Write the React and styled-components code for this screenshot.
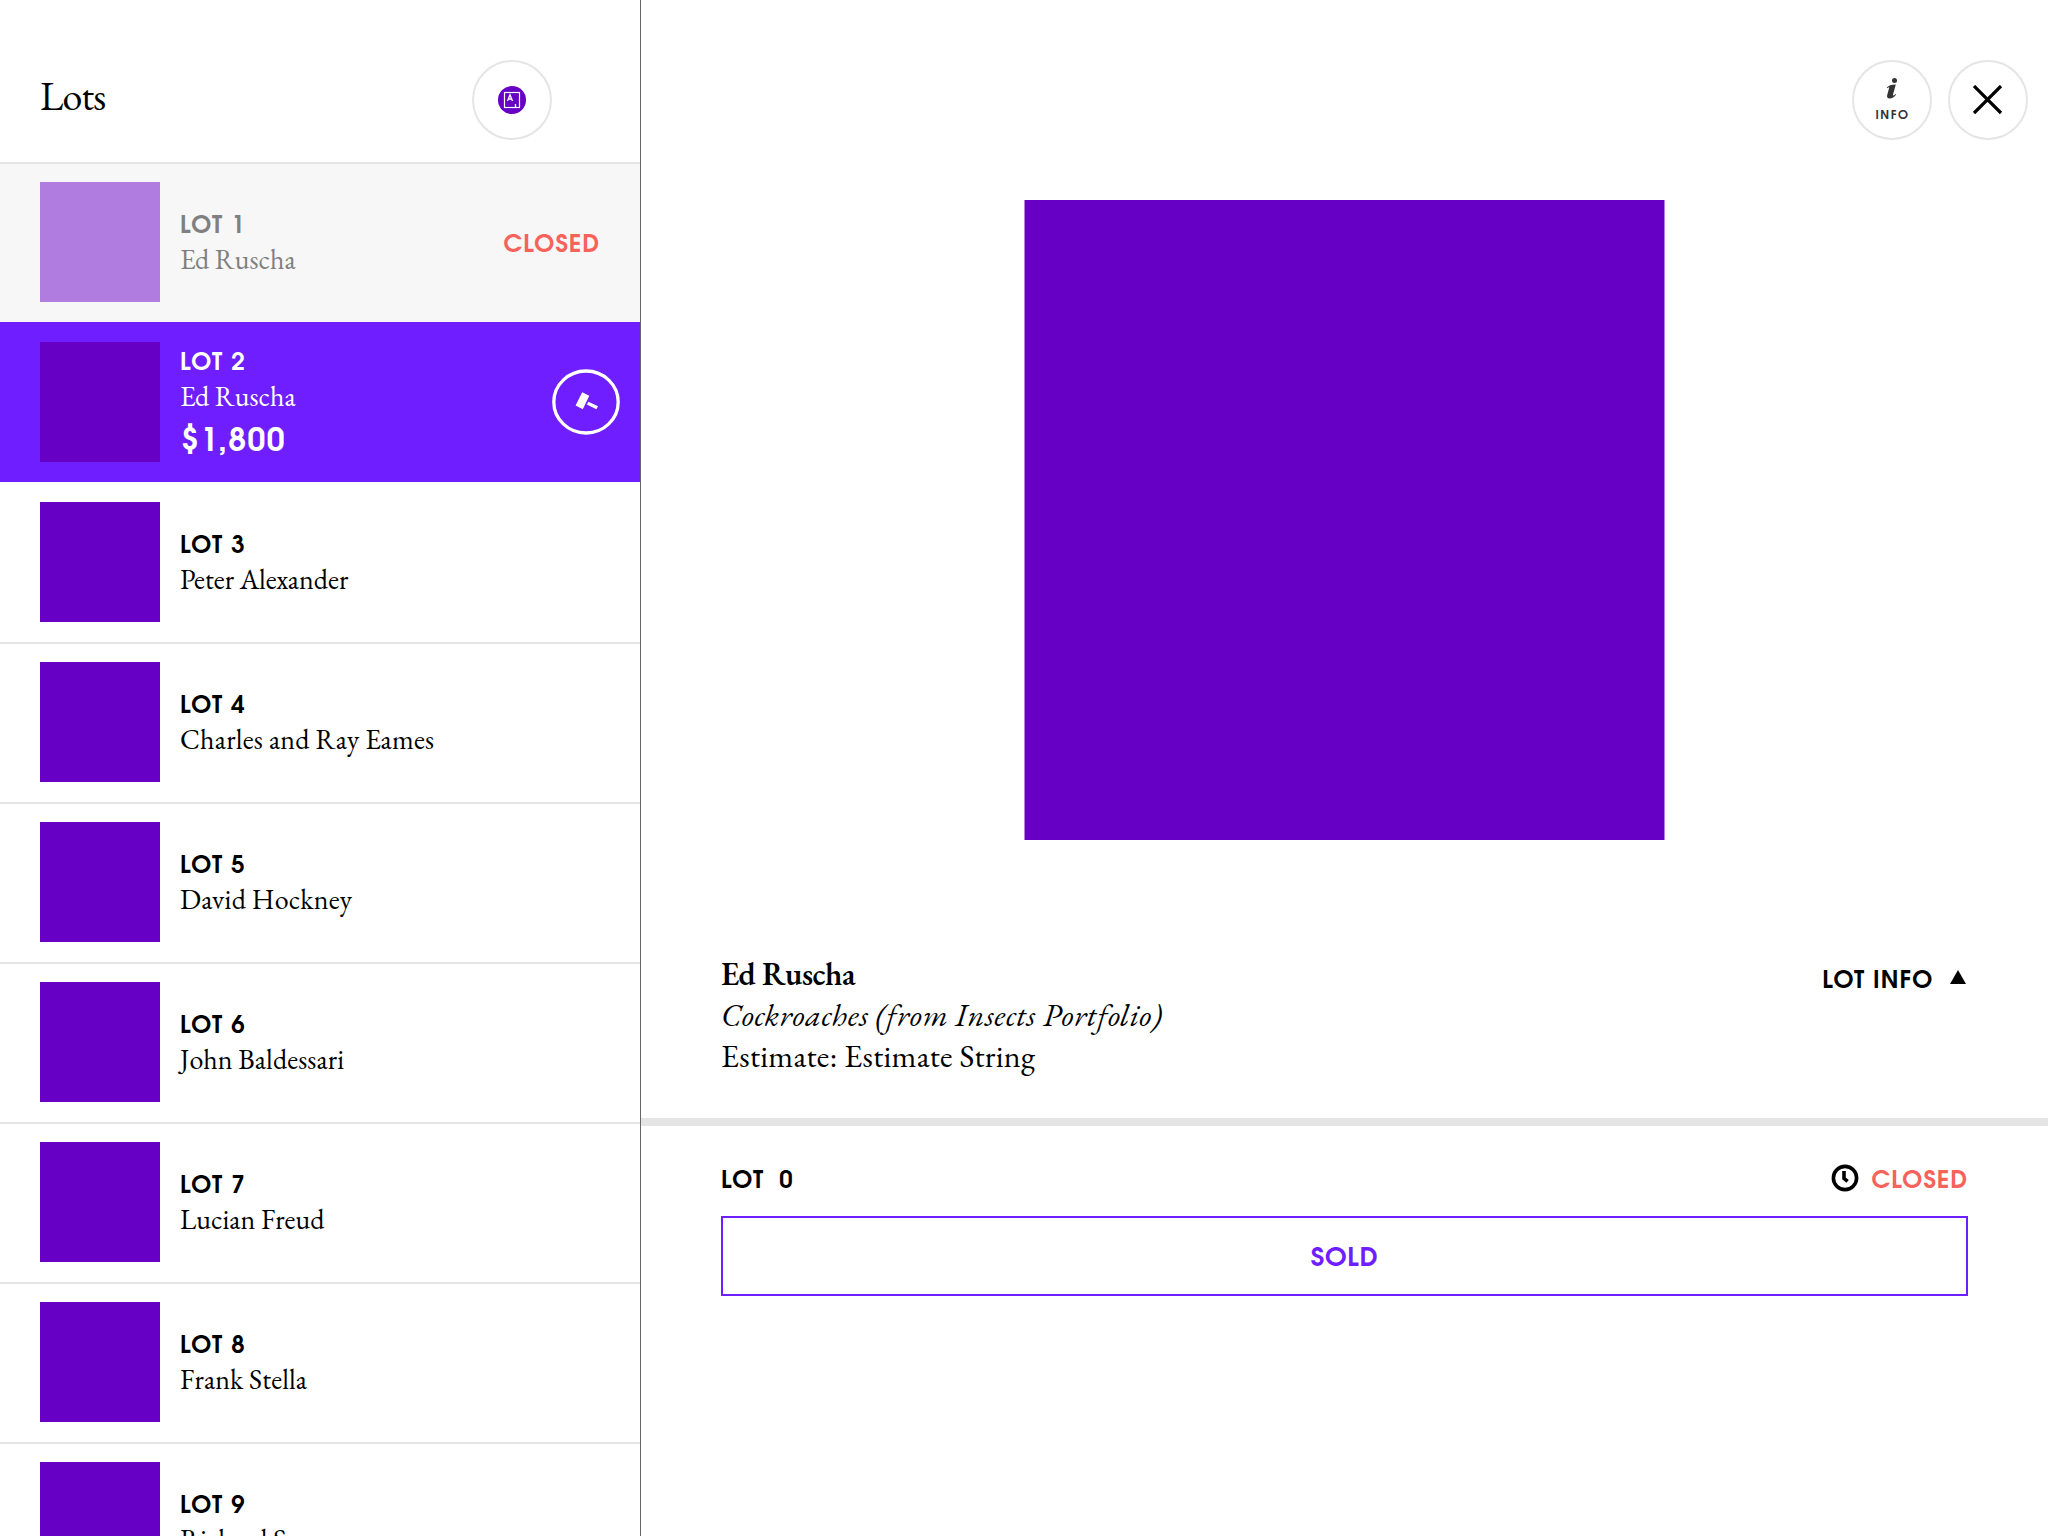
import React from "react";
import styled, { createGlobalStyle, css } from "styled-components";

const purple = "#6700c4";
const violet = "#6e1eff";
const coral = "#f7625a";
const line = "#e5e5e5";

const Global = createGlobalStyle`
  * { box-sizing: border-box; }
  body { margin: 0; background: #fff; color: #000; overflow: hidden; }
`;

const serif = css`font-family: "EB Garamond", "Liberation Serif", serif;`;
const sans = css`font-family: "TeX Gyre Adventor", Lato, "Liberation Sans", sans-serif; font-weight: 700;`;

const Screen = styled.div`
  display: flex;
  width: 2048px;
  height: 1536px;
  overflow: hidden;
`;

const Sidebar = styled.aside`
  flex: none;
  width: 641px;
  height: 1536px;
  overflow: hidden;
  border-right: 1px solid #666;
`;

const SidebarHeader = styled.header`
  display: flex;
  justify-content: space-between;
  align-items: flex-start;
  height: 162px;
  padding: 60px 88px 0 40px;
`;

const Heading = styled.h1`
  ${serif}
  margin: 12px 0 0;
  font-size: 40px;
  line-height: 48px;
  font-weight: 400;
  letter-spacing: -0.8px;
`;

const CircleButton = styled.button`
  display: flex;
  flex-direction: column;
  align-items: center;
  justify-content: center;
  width: 80px;
  height: 80px;
  padding: 0;
  border: 2px solid ${line};
  border-radius: 50%;
  background: #fff;
`;

const InfoLabel = styled.span`
  ${sans}
  height: 16px;
  margin-top: 7px;
  margin-right: -1px;
  padding-top: 2px;
  font-size: 12px;
  line-height: 16px;
  letter-spacing: 1.5px;
  color: #333;
`;

const Row = styled.article`
  display: flex;
  align-items: center;
  height: 160px;
  padding: 18px 20px 20px 40px;
  border-top: 2px solid ${(p) => (p.$state === "live" ? violet : p.$plain ? "#fff" : line)};
  background: ${(p) => (p.$state === "live" ? violet : p.$state === "closed" ? "#f7f7f7" : "#fff")};
  color: ${(p) => (p.$state === "live" ? "#fff" : p.$state === "closed" ? "#808080" : "#000")};
`;

const Thumb = styled.div`
  flex: none;
  width: 120px;
  height: 120px;
  background: ${(p) => (p.$faded ? "#b07ce0" : purple)};
`;

const RowText = styled.div`
  flex: 1;
  padding: 0 0 2px 20px;
`;

const LotNumber = styled.div`
  ${sans}
  height: 36px;
  padding-top: 3px;
  font-size: 24px;
  line-height: 36px;
  letter-spacing: ${(p) => p.$track ?? 1.2}px;
`;

const Artist = styled.div`
  ${serif}
  font-size: 28px;
  line-height: 36px;
  letter-spacing: ${(p) => p.$track ?? 0}px;
`;

const Price = styled.div`
  ${sans}
  height: 46px;
  padding: 5px 0 0 1px;
  font-size: 32px;
  line-height: 46px;
  letter-spacing: 1.3px;
`;

const Status = styled.span`
  ${sans}
  height: 36px;
  margin-right: 20px;
  padding-top: 3px;
  font-size: 24px;
  line-height: 36px;
  letter-spacing: 0.95px;
  color: ${coral};
`;

const Detail = styled.main`
  flex: 1;
  display: flex;
  flex-direction: column;
`;

const Toolbar = styled.div`
  display: flex;
  justify-content: flex-end;
  gap: 16px;
  height: 200px;
  padding: 60px 20px 0 0;
`;

const Artwork = styled.div`
  width: 640px;
  height: 640px;
  margin-left: 383px;
  transform: translateX(0.5px);
  background: ${purple};
`;

const Summary = styled.section`
  display: flex;
  justify-content: space-between;
  height: 286px;
  padding: 114px 80px 0;
  border-bottom: 8px solid ${line};
`;

const SummaryLine = styled.div`
  ${serif}
  font-size: 32px;
  line-height: 41px;
  letter-spacing: ${(p) => p.$track}px;
  font-style: ${(p) => (p.$italic ? "italic" : "normal")};
  font-weight: ${(p) => (p.$strong ? 600 : 400)};
`;

const InfoToggle = styled.div`
  display: flex;
  align-items: center;
  height: 36px;
  margin: 6px 2px 0 0;
  gap: 16.5px;
`;

const Bidding = styled.section`
  padding: 34px 80px 0;
`;

const BiddingHead = styled.div`
  display: flex;
  justify-content: space-between;
  align-items: center;
  height: 36px;
`;

const LotZero = styled.div`
  display: flex;
  gap: 15px;
`;

const Closed = styled.div`
  display: flex;
  align-items: center;
  gap: 13px;
  color: ${coral};
`;

const SoldButton = styled.button`
  ${sans}
  display: block;
  width: 1247px;
  height: 80px;
  margin-top: 20px;
  padding: 5px 0 0;
  border: 2px solid ${violet};
  background: #fff;
  color: ${violet};
  font-size: 26px;
  letter-spacing: 0.6px;
`;

const lots = [
  { n: 1, artist: "Ed Ruscha", state: "closed" },
  { n: 2, artist: "Ed Ruscha", state: "live", price: "$1,800" },
  { n: 3, artist: "Peter Alexander", plain: true },
  { n: 4, artist: "Charles and Ray Eames", track: 0.23 },
  { n: 5, artist: "David Hockney", track: 0.2 },
  { n: 6, artist: "John Baldessari", track: 0.1 },
  { n: 7, artist: "Lucian Freud" },
  { n: 8, artist: "Frank Stella", track: 0.12 },
  { n: 9, artist: "Richard Serra" },
];

const AuctionIcon = () => (
  <svg width="28" height="28" viewBox="0 0 28 28">
    <circle cx="14" cy="14" r="14" fill={purple} />
    <rect x="6.5" y="6.5" width="15" height="15" fill="none" stroke="#fff" strokeWidth="1.2" />
    <path d="M9.5 15 12 8.8 14.5 15M10.3 13H13.7M17.5 18v3" fill="none" stroke="#fff" strokeWidth="1.3" />
  </svg>
);

const GavelIcon = () => (
  <svg width="68" height="66" viewBox="0 0 68 66">
    <ellipse cx="34" cy="33" rx="32.2" ry="31" fill="none" stroke="#fff" strokeWidth="3.3" />
    <path d="M30.2 23.2 37.3 26.8 30.8 40.3 23.6 36.5ZM36.5 32.8 46 37.2 44.4 40.2 34.8 35.4Z" fill="#fff" />
  </svg>
);

const InfoIcon = () => (
  <svg width="12" height="21" viewBox="0 0 12 21">
    <circle cx="8.5" cy="2.6" r="2.5" fill="#333" />
    <path d="M.8 9.6C3 7.6 5.5 6.5 9.8 6.6L7 16.6c-.3 1.3.5 1.2 2.6-.7l.6.6C8.2 19.2 6 20.5 3.7 20.5 1.4 20.5.7 19 1.2 17L3.2 9.8c.2-.8-.4-.6-1.9.5Z" fill="#333" />
  </svg>
);

const CloseIcon = () => (
  <svg width="30" height="30" viewBox="0 0 30 30">
    <path d="M1 1 28 28M28 1 1 28" stroke="#000" strokeWidth="3.2" />
  </svg>
);

const ClockIcon = () => (
  <svg width="28" height="28" viewBox="0 0 28 28">
    <circle cx="14" cy="14" r="11.6" fill="none" stroke="#000" strokeWidth="3.6" />
    <path d="M13 7v7.3l3.6 3" fill="none" stroke="#000" strokeWidth="3.6" />
  </svg>
);

const Triangle = () => (
  <svg width="16" height="18" viewBox="0 0 16 18">
    <path d="M8 1 16 15H0Z" />
  </svg>
);

export default function App() {
  return (
    <>
      <Global />
      <Screen>
        <Sidebar>
          <SidebarHeader>
            <Heading>Lots</Heading>
            <CircleButton><AuctionIcon /></CircleButton>
          </SidebarHeader>
          {lots.map((lot) => (
            <Row key={lot.n} $state={lot.state} $plain={lot.plain}>
              <Thumb $faded={lot.state === "closed"} />
              <RowText>
                <LotNumber>LOT {lot.n}</LotNumber>
                <Artist $track={lot.track}>{lot.artist}</Artist>
                {lot.price && <Price>{lot.price}</Price>}
              </RowText>
              {lot.state === "closed" && <Status>CLOSED</Status>}
              {lot.state === "live" && <GavelIcon />}
            </Row>
          ))}
        </Sidebar>
        <Detail>
          <Toolbar>
            <CircleButton><InfoIcon /><InfoLabel>INFO</InfoLabel></CircleButton>
            <CircleButton><CloseIcon /></CircleButton>
          </Toolbar>
          <Artwork />
          <Summary>
            <div>
              <SummaryLine $strong $track={-0.45}>Ed Ruscha</SummaryLine>
              <SummaryLine $italic $track={0.6}>Cockroaches (from Insects Portfolio)</SummaryLine>
              <SummaryLine $track={0.25}>Estimate: Estimate String</SummaryLine>
            </div>
            <InfoToggle>
              <LotNumber $track={1.1}>LOT INFO</LotNumber>
              <Triangle />
            </InfoToggle>
          </Summary>
          <Bidding>
            <BiddingHead>
              <LotZero>
                <LotNumber>LOT</LotNumber>
                <LotNumber>0</LotNumber>
              </LotZero>
              <Closed>
                <ClockIcon />
                <LotNumber $track={0.95}>CLOSED</LotNumber>
              </Closed>
            </BiddingHead>
            <SoldButton>SOLD</SoldButton>
          </Bidding>
        </Detail>
      </Screen>
    </>
  );
}
